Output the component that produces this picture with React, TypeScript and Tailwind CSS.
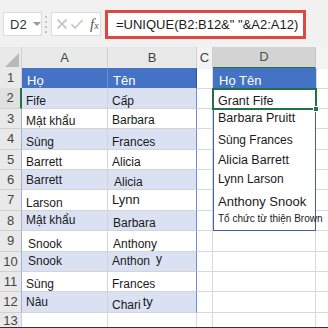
import React from "react";

const rows: { n: number; a: string; b: React.ReactNode; aCls?: string; bCls?: string }[] = [
  { n: 2, a: "Fife", b: "Cấp", aCls: "text-[12.5px]", bCls: "text-[12.5px]" },
  { n: 3, a: "Mật khẩu", b: "Barbara", aCls: "text-[11px]", bCls: "text-[12px] pb-[1px]" },
  { n: 4, a: "Sùng", b: "Frances" },
  { n: 5, a: "Barrett", b: "Alicia", bCls: "pb-0" },
  { n: 6, a: "Barrett", b: "Alicia", aCls: "pb-[2px]", bCls: "pl-[6px]" },
  { n: 7, a: "Larson", b: "Lynn", bCls: "text-[13px] pb-[3px]" },
  { n: 8, a: "Mật khẩu", b: "Barbara", aCls: "text-[11px] pb-[3px]", bCls: "pl-[5px]" },
  { n: 9, a: "Snook", b: "Anthony", aCls: "text-[12.5px] pl-[6px]", bCls: "text-[12.5px] pl-[5px]" },
  {
    n: 10,
    a: "Snook",
    b: (
      <span>
        Anthon<span className="relative -top-[2px] ml-[6px]">y</span>
      </span>
    ),
    aCls: "text-[12.5px] pl-[6px] pb-[3px]",
    bCls: "text-[12.5px] pb-[3px]",
  },
  { n: 11, a: "Sùng", b: "Frances", aCls: "text-[11px]", bCls: "text-[11px]" },
  {
    n: 12,
    a: "Nâu",
    b: (
      <span>
        Chari<span className="relative -top-[3px] ml-[2px] text-[13px]">ty</span>
      </span>
    ),
    aCls: "text-[11.5px] pb-[3px]",
    bCls: "text-[11.5px]",
  },
];

const dVals: { t: string; cls: string }[] = [
  { t: "Grant Fife", cls: "text-[12.5px] pb-[1px]" },
  { t: "Barbara Pruitt", cls: "text-[12.5px] pb-[4px]" },
  { t: "Sùng Frances", cls: "text-[12px] pb-[3px]" },
  { t: "Alicia Barrett", cls: "text-[12.5px] pb-[3px]" },
  { t: "Lynn Larson", cls: "text-[12px] pb-[4px]" },
  { t: "Anthony Snook", cls: "text-[13px] pb-[3px]" },
  { t: "Tổ chức từ thiện Brown", cls: "text-[10px] pb-[5px]" },
];

const RH = "h-[20.4px]";
const COLS = "grid grid-cols-[22px_86px_89px_16px_103px_12px]";

export default function App() {
  return (
    <div
      className="relative w-[328px] h-[328px] overflow-hidden bg-white text-[#1a1a1a]"
      style={{ fontFamily: '"Liberation Sans", Arial, sans-serif' }}
    >
      {/* toolbar */}
      <div className="h-[47px] bg-[#f1f1f1] flex items-start">
        <div className="mt-[12px] ml-[3px] w-[39px] h-[24px] bg-white border border-[#dadada] flex items-center pl-[6px]">
          <span className="text-[13px] text-[#333] leading-none">D2</span>
          <span className="ml-[6px] w-0 h-0 border-l-[4px] border-r-[4px] border-t-[4px] border-l-transparent border-r-transparent border-t-[#9a9a9a]" />
        </div>
        <div className="mt-[16px] ml-[3px] flex flex-col gap-[3px]">
          <span className="w-[2px] h-[2px] bg-[#c4c4c4]" />
          <span className="w-[2px] h-[2px] bg-[#c4c4c4]" />
          <span className="w-[2px] h-[2px] bg-[#c4c4c4]" />
          <span className="w-[2px] h-[2px] bg-[#c4c4c4]" />
        </div>
        <div className="mt-[12px] ml-[4px] w-[50px] h-[24px] bg-white border border-[#dadada] flex items-center pl-[4px] gap-[2px]">
          <svg width="12" height="12" viewBox="0 0 12 12">
            <path d="M1.5 1.5 L10.5 10.5 M10.5 1.5 L1.5 10.5" stroke="#c8c8c8" strokeWidth="1.8" fill="none" />
          </svg>
          <svg width="14" height="12" viewBox="0 0 14 12">
            <path d="M1.5 6.5 L5 10 L12.5 2" stroke="#c8c8c8" strokeWidth="1.8" fill="none" />
          </svg>
          <span
            className="ml-[4px] text-[15px] italic text-[#555] leading-none"
            style={{ fontFamily: '"Liberation Serif", "DejaVu Serif", serif' }}
          >
            f<span className="text-[10px]">x</span>
          </span>
        </div>
        <div className="mt-[10px] ml-[4px] w-[201px] h-[29px] bg-white border-[3px] border-[#dc4a3f] flex items-center pl-[8px]">
          <span className="text-[13px] text-[#1a1a1a] leading-none whitespace-nowrap">
            =UNIQUE(B2:B12&amp;" "&amp;A2:A12)
          </span>
        </div>
      </div>

      {/* column headers */}
      <div className={`${COLS} h-[21px] bg-[#e9e9e9] text-[13px] text-[#444]`}>
        <div className="relative border-r border-[#d0d0d0]">
          <svg className="absolute right-[2px] bottom-[2px]" width="14" height="14" viewBox="0 0 14 14">
            <path d="M14 0 L14 14 L0 14 Z" fill="#b9b9b9" />
          </svg>
        </div>
        <div className="border-r border-[#d0d0d0] flex items-center justify-center">A</div>
        <div className="border-r border-[#d0d0d0] flex items-center justify-center">B</div>
        <div className="border-r border-[#d0d0d0] flex items-center justify-center bg-[#f3f3f3]">C</div>
        <div className="border-r border-[#c6c6c6] flex items-center justify-center bg-[#d3d3d3] text-[#3d5a45] border-b-2 border-b-[#217346]">
          D
        </div>
        <div className="bg-[#f3f3f3]" />
      </div>

      {/* row 1 */}
      <div className={`${COLS} ${RH}`}>
        <div className="bg-[#e9e9e9] border-r border-b border-[#d0d0d0] flex items-center justify-center text-[13px] text-[#444]">1</div>
        <div className="bg-[#4472c4] text-white text-[13px] flex items-end pl-[5px] pb-[1px] leading-[14px] border-r border-[#6f8fcf]">Họ</div>
        <div className="bg-[#4472c4] text-white text-[13px] flex items-end pl-[5px] pb-[1px] leading-[14px] border-r border-[#2f55a0]">Tên</div>
        <div className="border-r border-b border-[#d9d9d9]" />
        <div className="bg-[#4472c4] text-white text-[13px] flex items-end pl-[6px] pb-[1px] leading-[14px]">Họ Tên</div>
        <div className="border-l border-b border-[#d9d9d9]" />
      </div>

      {rows.map((r, i) => {
        const band = r.n % 2 === 0 ? "bg-[#d9e1f2]" : "bg-white";
        const d = dVals[i];
        const last = r.n === 8;
        return (
          <div key={r.n} className={`${COLS} ${RH}`}>
            <div
              className={`border-b border-[#d0d0d0] flex items-center justify-center text-[13px] text-[#444] ${
                r.n === 2 ? "border-r-2 border-r-[#217346] bg-[#e0e0e0]" : "bg-[#e9e9e9] border-r border-r-[#9fb2d6]"
              }`}
            >
              {r.n}
            </div>
            <div
              className={`${band} border-r border-b border-[#d4d4d4] flex items-end pl-[4px] leading-[14px] text-[12px] whitespace-nowrap ${
                r.aCls ?? ""
              }`}
            >
              {r.a}
            </div>
            <div
              className={`${band} border-r border-r-[#6f8fcf] border-b border-b-[#d4d4d4] flex items-end pl-[4px] leading-[14px] text-[12px] whitespace-nowrap ${
                r.bCls ?? ""
              }`}
            >
              {r.b}
            </div>
            <div className="border-r border-b border-[#d9d9d9]" />
            {d ? (
              <div
                className={`bg-white border-l border-r border-[#3f5fa8] flex items-end pl-[4px] leading-[13px] whitespace-nowrap ${
                  last ? "border-b" : ""
                } ${d.cls}`}
              >
                {d.t}
              </div>
            ) : (
              <div className="border-r border-b border-[#d9d9d9]" />
            )}
            <div className="border-b border-[#d9d9d9]" />
          </div>
        );
      })}

      <div className={`${COLS} h-[15px]`}>
        <div className="bg-[#e9e9e9] border-r border-[#d0d0d0] flex items-center justify-center text-[13px] leading-none text-[#444]">13</div>
        <div className="border-r border-[#d9d9d9]" />
        <div className="border-r border-[#d9d9d9]" />
        <div className="border-r border-[#d9d9d9]" />
        <div className="border-r border-[#d9d9d9]" />
        <div />
      </div>

      {/* active cell D2 */}
      <div className="absolute left-[212px] top-[88px] w-[105px] h-[22px] border-2 border-[#217346] pointer-events-none">
        <div className="absolute -right-[4px] -bottom-[4px] w-[6px] h-[6px] bg-[#217346] border border-white" />
      </div>

      {/* bottom frame line */}
      <div className="absolute left-0 right-0 bottom-0 h-[1px] bg-[#333]" />
    </div>
  );
}
